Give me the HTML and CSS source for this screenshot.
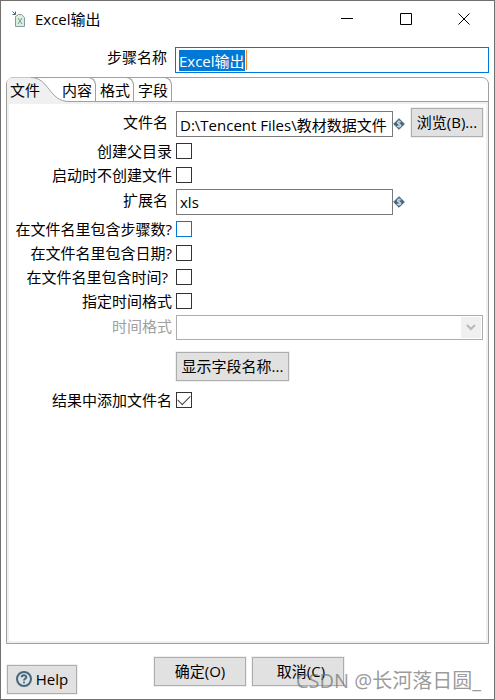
FILE: index.html
```html
<!DOCTYPE html>
<html lang="zh-CN">
<head>
<meta charset="utf-8">
<title>Excel输出</title>
<link rel="stylesheet" href="styles.css">
</head>
<body>
<svg width="0" height="0" class="defs" aria-hidden="true">
  <symbol id="variable" viewBox="0 0 12 12">
    <path d="M6 0.700L11.300 6L6 11.300L0.700 6Z" fill="#42677f" stroke="#42677f" stroke-linejoin="round"/>
    <path d="M7.900 4.300C7.500 3.200 4.300 3 4.300 4.700S7.900 5.800 7.900 7.400S4.700 9 4.100 7.700M6 2.300V9.700" fill="none" stroke="#d3dde5" stroke-width="1.100"/>
  </symbol>
</svg>
<div class="window">
  <header class="titlebar">
    <svg class="app-icon" viewBox="0 0 14 17" aria-hidden="true">
      <path d="M3.500 5.500L6.500 3.500H9.500L12.500 6.500V15.500H3.500Z" fill="#dcefd9" stroke="#8199a8"/>
      <path d="M6 7L10 13M10 7L6 13" stroke="#789ba3" fill="none"/>
      <path d="M0.500 0.500L3 3M3.500 0.500V3.500H0.500" stroke="#42677f" fill="none"/>
    </svg>
    <h1>Excel输出</h1>
    <div class="window-buttons">
      <button type="button" aria-label="最小化"><svg viewBox="0 0 12 12"><path d="M0 5.500H12"/></svg></button>
      <button type="button" aria-label="最大化"><svg viewBox="0 0 12 12"><path d="M0.500 0.500H11.500V11.500H0.500Z"/></svg></button>
      <button type="button" aria-label="关闭"><svg viewBox="0 0 12 12"><path d="M0.500 0.500L11.500 11.500M11.500 0.500L0.500 11.500"/></svg></button>
    </div>
  </header>

  <div class="step-row">
    <label for="step">步骤名称</label>
    <input id="step" class="text step" type="text" value="Excel输出">
  </div>

  <main class="panel">
    <div class="tabs" role="tablist">
      <button class="tab selected" type="button" role="tab" aria-selected="true">
        <svg viewBox="0 0 62 26" aria-hidden="true"><path class="tab-fill" d="M0 26V6Q0 0.500 6 0.500H24C42 0.500 42 24.500 62 24.500V26Z"/><path class="tab-line" d="M24 0.500C42 0.500 42 24.500 62 24.500"/></svg>
        <span>文件</span>
      </button>
      <button class="tab" type="button" role="tab">内容</button>
      <button class="tab" type="button" role="tab">格式</button>
      <button class="tab" type="button" role="tab">字段</button>
    </div>
    <form class="form">
      <div class="row field">
        <label for="file">文件名</label>
        <div class="control">
          <input id="file" class="text" type="text" value="D:\Tencent Files\教材数据文件">
          <svg class="variable"><use href="#variable"/></svg>
          <button class="button browse" type="button">浏览(B)...</button>
        </div>
      </div>
      <div class="row"><label for="c1">创建父目录</label><input id="c1" type="checkbox"></div>
      <div class="row"><label for="c2">启动时不创建文件</label><input id="c2" type="checkbox"></div>
      <div class="row field">
        <label for="ext">扩展名</label>
        <div class="control">
          <input id="ext" class="text" type="text" value="xls">
          <svg class="variable"><use href="#variable"/></svg>
        </div>
      </div>
      <div class="row"><label for="c3">在文件名里包含步骤数?</label><input id="c3" class="hot" type="checkbox"></div>
      <div class="row"><label for="c4">在文件名里包含日期?</label><input id="c4" type="checkbox"></div>
      <div class="row spaced"><label for="c5">在文件名里包含时间?</label><input id="c5" type="checkbox"></div>
      <div class="row"><label for="c6">指定时间格式</label><input id="c6" type="checkbox"></div>
      <div class="row format">
        <label for="fmt">时间格式</label>
        <div class="select">
          <select id="fmt" disabled><option></option></select>
          <span class="arrow"><svg viewBox="0 0 10 7" aria-hidden="true"><path d="M1 1L5 5L9 1"/></svg></span>
        </div>
      </div>
      <div class="row show"><button class="button" type="button">显示字段名称...</button></div>
      <div class="row"><label for="c7">结果中添加文件名</label><input id="c7" type="checkbox" checked></div>
    </form>
  </main>

  <footer class="footer">
    <button class="button help" type="button">
      <svg viewBox="0 0 16 16" aria-hidden="true"><circle cx="8" cy="8" r="7"/><path d="M5.700 6.300C5.700 3.500 10.300 3.500 10.300 6.200C10.300 7.800 8 7.800 8 9.500M8 10.800V12.300"/></svg>
      Help
    </button>
    <div class="actions">
      <button class="button" type="button">确定(O)</button>
      <button class="button cancel" type="button">取消(C)</button>
    </div>
    <span class="watermark">CSDN @长河落日圆_</span>
  </footer>
</div>
<script src="main.js"></script>
</body>
</html>
```
FILE: main.js
```js
const step = document.getElementById("step");
step.focus();
step.select();
```
FILE: styles.css
```css
* { box-sizing: border-box; }

body {
  margin: 0;
  background: #fff;
  color: #000;
  font: 15px/20px "Open Sans", "Noto Sans CJK SC", sans-serif;
}

button, input, select { font: inherit; color: inherit; }
button { padding: 0; }

.defs { position: absolute; }

.window {
  display: flex;
  flex-direction: column;
  min-height: 100vh;
  padding: 0 5px;
  border: 1px solid #707070;
}

.titlebar {
  display: flex;
  align-items: center;
  height: 36px;
  padding-left: 6px;
}

.app-icon { width: 14px; height: 17px; margin-right: 9px; }

h1 { margin: 0; font-size: 15px; font-weight: 400; }

.window-buttons { display: flex; margin-left: auto; }

.window-buttons button {
  display: grid;
  place-items: center;
  width: 59px;
  height: 34px;
  border: 0;
  background: none;
}

.window-buttons button:last-child { width: 58px; margin-right: -4px; }

.window-buttons svg {
  width: 12px;
  height: 12px;
  fill: none;
  stroke: #000;
}

.step-row {
  display: grid;
  grid-template-columns: 161px 1fr;
  gap: 8px;
  margin: 10px 0 4px;
}

.step-row label { text-align: right; }

.text {
  height: 26px;
  min-width: 0;
  padding: 0 2px 0 3px;
  border: 1px solid #7a7a7a;
  border-radius: 0;
  outline: 0;
  background: #fff;
}

/* The gradient is the orange text cursor at the end of the selection. */
.step {
  border-color: #0078d7;
  background: linear-gradient(#ff8728, #ff8728) 70px 2px / 1px 20px no-repeat #fff;
}

.step::selection { background: #0078d7; color: #fff; }

.panel {
  flex: 1;
  display: flex;
  flex-direction: column;
  border: 1px solid #a0a0a0;
  border-radius: 7px 7px 0 0;
}

.tabs {
  display: flex;
  height: 24px;
  border-bottom: 1px solid #a0a0a0;
}

.tab {
  width: 38px;
  margin-top: -1px;
  padding: 0 3px 0 0;
  border: 0 solid #a0a0a0;
  border-width: 1px 1px 0 0;
  border-radius: 0 8px 0 0;
  background: none;
  text-align: right;
  white-space: nowrap;
}

.tab:nth-child(2) { width: 33px; padding-left: 0; direction: rtl; }

.tab.selected {
  position: relative;
  width: 56px;
  padding: 1px 0 0 3px;
  border: 0;
  text-align: left;
}

.tab svg {
  position: absolute;
  top: 0;
  left: 0;
  width: 62px;
  height: 26px;
}

.tab span { position: relative; }
.tab-fill { fill: #f0f0f0; }
.tab-line { fill: none; stroke: #a0a0a0; }

.form {
  flex: 1;
  padding: 5px 3px 0 0;
  border: 2px solid #f0f0f0;
}

.row {
  display: grid;
  grid-template-columns: 163px 1fr;
  gap: 4px;
  align-items: center;
  min-height: 24px;
}

.row label { text-align: right; white-space: nowrap; }
.spaced label { padding-right: 4px; }

.field { min-height: 30px; }
.field label { padding: 0 4px 5px 0; }

.control { display: flex; align-items: center; }
.control .text { width: 217px; }

.variable { flex: none; width: 12px; height: 12px; }

.button {
  height: 29px;
  padding-bottom: 2px;
  border: 1px solid #adadad;
  outline: 1px solid #f0f0f0;
  border-radius: 0;
  background: #e1e1e1;
  white-space: nowrap;
}

.browse { width: 72px; margin: -3px 0 0 auto; }

input[type="checkbox"] {
  appearance: none;
  display: grid;
  place-items: center;
  width: 16px;
  height: 16px;
  margin: 0;
  border: 1px solid #333;
  background: #fff;
}

input.hot { border-color: #0078d7; }

input[type="checkbox"]:checked::before {
  content: "";
  width: 11px;
  height: 6px;
  margin-bottom: 4px;
  border: solid #444;
  border-width: 0 0 1px 1px;
  transform: rotate(-45deg);
}

.format { min-height: 29px; }
.format label { padding-bottom: 4px; color: #a0a0a0; }

.select { position: relative; height: 25px; }

.select select {
  appearance: none;
  width: 100%;
  height: 100%;
  border: 1px solid #adadad;
  border-radius: 0;
  background: #fff;
  opacity: 1;
}

.arrow {
  position: absolute;
  top: 2px;
  right: 2px;
  bottom: 2px;
  display: grid;
  place-items: center;
  width: 20px;
  background: #f0f0f0;
  pointer-events: none;
}

.arrow svg { width: 10px; height: 7px; fill: none; stroke: #b8b8b8; stroke-width: 2; }

.show { padding: 10px 0 7px; }
.show .button { grid-column: 2; justify-self: start; width: 113px; }

.footer {
  position: relative;
  display: flex;
  align-items: flex-start;
  height: 55px;
  padding-top: 13px;
}

.help {
  display: flex;
  align-items: center;
  justify-content: center;
  gap: 4px;
  width: 70px;
  margin: 8px 0 0 1px;
}

.help svg { width: 16px; height: 16px; fill: none; stroke: #42677f; stroke-width: 2; }

.actions { display: flex; gap: 6px; margin-left: 77px; }
.actions .button { width: 92px; }
.actions .cancel { padding-left: 6px; }

.watermark {
  position: absolute;
  right: 8px;
  bottom: 4px;
  font-size: 20px;
  line-height: 28px;
  color: rgb(110 110 110 / 70%);
  pointer-events: none;
}
```
